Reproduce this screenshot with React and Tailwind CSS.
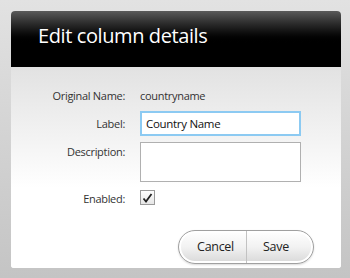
export default function App() {
  return (
    <div
      className="h-[278px] w-[350px] bg-gradient-to-b from-[#e2e2e2] to-[#c4c4c4] pt-[11px] px-[11px]"
      style={{ fontFamily: '"Open Sans", "Noto Sans", sans-serif' }}
    >
      <div className="h-[257px] w-[330px] overflow-hidden rounded-t-[4px] rounded-b-[3px] bg-white">
        <div className="flex h-[56px] items-start bg-gradient-to-b from-[#5a5a5a] via-[#000] via-60% to-[#000] pl-[27px] pt-[13px]">
          <h1 className="text-[20px] leading-[24px] tracking-[-0.4px] text-white">Edit column details</h1>
        </div>
        <div className="h-[201px] bg-gradient-to-b from-[#e2e2e2] to-white to-60% pt-[21px] text-[11px] tracking-[-0.3px] text-[#333]">
          <div className="grid grid-cols-[114px_161px] items-start gap-x-[15px]">
            <div className="text-right leading-[16px]">Original Name:</div>
            <div className="leading-[16px]">countryname</div>

            <div className="mt-[12px] text-right leading-[16px]">Label:</div>
            <input
              defaultValue="Country Name"
              className="mt-[7px] h-[25px] w-[161px] border-2 border-[#8ccaf2] bg-white px-[4px] text-[11.5px] tracking-[-0.3px] text-[#111] outline-none"
            />

            <div className="mt-[8px] text-right leading-[16px]">Description:</div>
            <textarea className="mt-[6px] h-[40px] w-[161px] resize-none border border-[#b0b0b0] bg-white outline-none" />

            <div className="mt-[9px] text-right leading-[16px]">Enabled:</div>
            <div className="mt-[8px] flex h-[15px] w-[15px] items-center justify-center border border-[#9a9a9a] bg-gradient-to-b from-white to-[#e6e6e6]">
              <svg width="11" height="10" viewBox="0 0 11 10">
                <path d="M1.5 5.5 L4 8.5 L9.5 1" fill="none" stroke="#222" strokeWidth="1.8" />
              </svg>
            </div>
          </div>
          <div className="mt-[23px] flex justify-end pr-[27px]">
            <div className="flex h-[34px] overflow-hidden rounded-full border border-[#a0a0a0] bg-gradient-to-b from-white via-[#f2f2f2] to-[#d8d8d8] shadow-[inset_0_0_0_2px_#fff,0_1px_2px_rgba(0,0,0,0.15)]">
              <button className="w-[67px] pl-[6px] text-[12.5px] tracking-[-0.3px] text-[#222]">Cancel</button>
              <div className="w-px bg-[#c2c2c2]" />
              <button className="w-[66px] pr-[8px] text-[12.5px] tracking-[-0.3px] text-[#222]">Save</button>
            </div>
          </div>
        </div>
      </div>
    </div>
  );
}
